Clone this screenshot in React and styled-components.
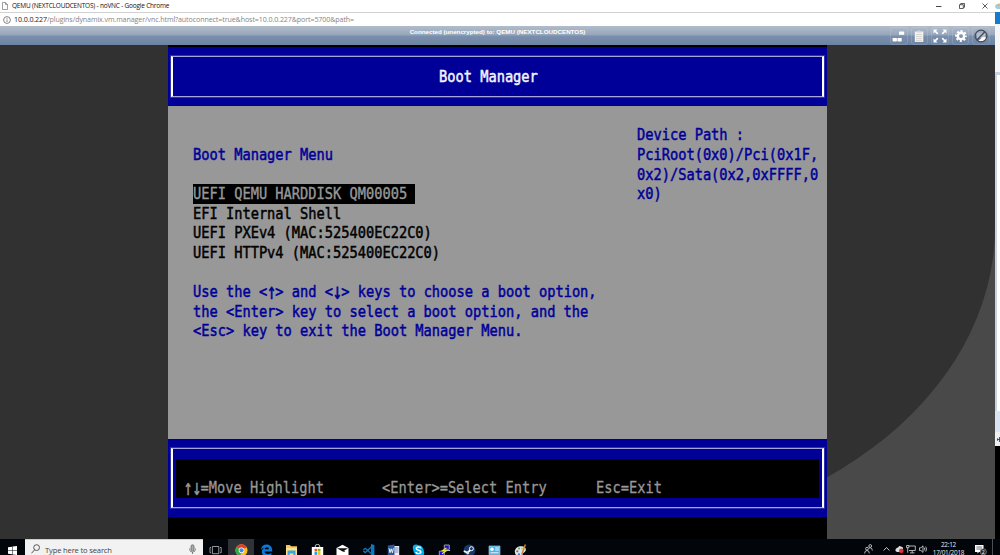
import styled, { createGlobalStyle } from 'styled-components'

const GlobalStyle = createGlobalStyle`
    * { box-sizing: border-box; }
    body {
        margin: 0;
        background: #000;
        overflow: hidden;
        font-family: "Open Sans", "Noto Sans", sans-serif;
    }
    svg { display: block; flex: none; }
`

const Desktop = styled.div`
    width: 1000px;
    height: 555px;
    display: flex;
    flex-direction: column;
    overflow: hidden;
`
const Workspace = styled.div`
    height: 539px;
    display: flex;
`
const ChromeWindow = styled.div`
    width: 995px;
    display: flex;
    flex-direction: column;
`
const TitleBar = styled.div`
    height: 13px;
    background: #fff;
    border-bottom: 1px solid #d2d2d2;
    display: flex;
    align-items: center;
    padding: 0 7px 0 2px;
`
const Title = styled.span`
    font-size: 6.5px;
    line-height: 12px;
    letter-spacing: -0.2px;
    white-space: nowrap;
    color: #111;
    margin-left: 4px;
    flex: 1;
`
const WindowButtons = styled.div`
    display: flex;
    gap: 17px;
    margin-top: -1px;
`
const AddressBar = styled.div`
    height: 13px;
    background: #fff;
    display: flex;
    align-items: center;
    padding-left: 3px;
`
const Address = styled.span`
    font-size: 7.1px;
    line-height: 13px;
    margin-left: 3px;
    white-space: nowrap;
    color: #858585;
    letter-spacing: -0.1px;
    b { font-weight: 400; color: #222; }
`
const NoVncBar = styled.div`
    height: 19px;
    background: linear-gradient(#b2bdcb 0%, #94a5bb 49%, #7b90ad 51%, #6c83a3 100%);
    display: grid;
    grid-template-columns: 105px 1fr 105px;
`
const Status = styled.div`
    font: bold 6.22px/12px "Liberation Sans", Arial, sans-serif;
    text-align: center;
    color: #fff;
    white-space: nowrap;
`
const Tools = styled.div`
    display: flex;
    justify-content: flex-end;
    gap: 2.6px;
    padding: 0.5px 5px 0 0;
`
const ToolButton = styled.div`
    width: 18px;
    height: 18px;
    border: 1px solid rgba(255, 255, 255, 0.13);
    border-radius: 3px;
    display: flex;
    align-items: center;
    justify-content: center;
`
const Backdrop = styled.div`
    flex: 1;
    background: #494949;
`
const Screen = styled.div`
    height: 494px;
    background: #313131;
    border-bottom-right-radius: 417px 312px;
    display: flex;
    padding-left: 168px;
`
const Terminal = styled.div`
    width: 659px;
    background: #000;
    padding-top: 2px;
    font-family: "DejaVu Sans Mono", monospace;
`
const Banner = styled.div`
    height: 59px;
    background: #000098;
    padding: 9px 3px 8.5px;
`
const Frame = styled.div`
    height: ${p => p.$height};
    border-style: solid;
    border-color: #a5a5dc #fff;
    border-width: 1px 2px;
    display: flex;
    flex-direction: column;
    outline: 1px solid rgba(140, 140, 215, 0.35);
`
const BannerText = styled.div`
    flex: 1;
    display: flex;
    align-items: center;
    padding-left: 266px;
`
// 80x25 text grid: one cell is 8.235 x 19.58
const Line = styled.div`
    font-size: 16px;
    line-height: 19.58px;
    height: 19.58px;
    width: 0;
    white-space: pre;
    transform: scaleX(0.855);
    transform-origin: 0 50%;
    -webkit-text-stroke: ${p => p.$stroke || '0.5px'};
    color: ${p => p.$color || '#000098'};
`
const Arrow = styled.span`
    display: inline-block;
    transform: translateY(-0.5px) scale(1.1, 1.4);
`
const Panel = styled.div`
    height: 332.5px;
    background: #989898;
    display: grid;
    grid-template-columns: 444.5px 1fr;
    padding: 19.4px 0 0 24.5px;
`
const Menu = styled.div`
    padding-top: 19.58px;
`
const Options = styled.div`
    margin: 19.58px 0;
`
const Selected = styled.div`
    width: 222.4px;
    height: 19.58px;
    background: #000;
`
const Footer = styled.div`
    height: 78.5px;
    background: #000098;
    padding: 9.5px 3px;
`
const Keys = styled.div`
    margin: 9.5px 3.5px 0 3px;
    height: 39.2px;
    background: #000;
    display: grid;
    grid-template-columns: 197.6px 214.1px 1fr;
    align-items: end;
    padding-left: 8px;
`
const Background = styled.div`
    width: 5px;
    display: flex;
    flex-direction: column;
    background: #000;
`
const Strip = styled.div`
    height: ${p => p.$height}px;
    background: ${p => p.$color};
    border-left: ${p => p.$edge || 'none'};
    border-top: ${p => p.$top || 'none'};
    overflow: hidden;
`
const Taskbar = styled.div`
    height: 16px;
    background: #02060b;
    display: flex;
    overflow: hidden;
`
const StartButton = styled.div`
    width: 25px;
    padding: 6.5px 0 0 8px;
`
const Search = styled.div`
    width: 178px;
    height: 16px;
    background: #f2f2f2;
    border-top: 1px solid #ccc;
    display: flex;
    align-items: flex-start;
    padding: 4px 7px 0 6px;
`
const SearchText = styled.span`
    flex: 1;
    font-size: 7.6px;
    line-height: 12px;
    margin-left: 5px;
    letter-spacing: -0.16px;
    color: #444;
    white-space: nowrap;
`
const TaskButton = styled.div`
    width: 25.4px;
    height: 16px;
    padding-top: 5px;
    display: flex;
    justify-content: center;
    background: ${p => (p.$active ? '#2f3236' : 'transparent')};
`
const Tray = styled.div`
    margin-left: auto;
    display: flex;
    align-items: flex-start;
    padding-top: 5px;
`
const TrayIcon = styled.div`
    width: ${p => p.$width}px;
    display: flex;
    justify-content: center;
`
const Clock = styled.div`
    width: 39px;
    margin: -3px 0 0 1px;
    font-size: 6.4px;
    line-height: 8.4px;
    text-align: center;
    letter-spacing: -0.25px;
    color: #e8e8e8;
`
const ShowDesktop = styled.div`
    width: 8px;
    height: 16px;
    margin-top: -5px;
    border-left: 1px solid #4c4f53;
`

const tools = [
    <svg width="14" height="14" viewBox="0 0 14 14" fill="#fff">
        <rect x="7" y="2.4" width="5.2" height="3.4" rx=".6" />
        <rect x="0.6" y="9" width="4.3" height="3.4" rx=".6" />
        <rect x="5.4" y="9" width="4.3" height="3.4" rx=".6" />
    </svg>,
    <svg width="14" height="14" viewBox="0 0 14 14">
        <path d="M2.8 2.5h8.5v10.4H2.8z" fill="#f5f3ed" />
        <path d="M4.8 2.7 6 1.2h2l1.2 1.5v.8H4.8z" fill="#d3d3d3" />
        <path d="M4 5.5h6M4 7.5h6M4 9.5h6M4 11.4h6" stroke="#c0c0bc" strokeWidth=".6" />
    </svg>,
    <svg width="14" height="14" viewBox="0 0 14 14" fill="#fff" stroke="#fff" strokeWidth="1.7">
        <path d="M1.5 1.5l3.3 3.3M12.5 1.5 9.2 4.8M1.5 12.5l3.3-3.3M12.5 12.5 9.2 9.2" />
        <path stroke="none" d="M.5.5h4L.5 4.5zM13.5.5h-4l4 4zM.5 13.5h4l-4-4zM13.5 13.5h-4l4-4z" />
    </svg>,
    <svg width="14" height="14" viewBox="0 0 14 14" fill="none" stroke="#fff">
        <circle cx="7" cy="7" r="3.2" strokeWidth="2.4" />
        <circle cx="7" cy="7" r="4.9" strokeWidth="2" strokeDasharray="2.1 1.748" strokeDashoffset="1.05" />
    </svg>,
    <svg width="14" height="14" viewBox="0 0 14 14" fill="none">
        <path d="M3 3.8h8v5.3H3z" fill="#b4bdc9" />
        <path d="M4.5 12 7 9.6l1-1.400 3.6-.2.4 2L9 12z" fill="#fff" />
        <circle cx="7" cy="7" r="5.9" stroke="#454b54" strokeWidth="1.2" />
        <path d="M10.9 2.8 3 11" stroke="#454b54" strokeWidth="1.3" />
    </svg>,
]

const apps = [
    { name: 'taskview', icon: <g fill="none" stroke="#bbb" strokeWidth=".8"><path d="M3.4 2.5h6.4v7.2H3.4zM2 3.5H1v5.2h1M11 3.5h1.2v5.2H11" /></g> },
    { name: 'chrome', active: true, icon: <>
        <circle cx="6.5" cy="6.3" r="6" fill="#fbc116" />
        <path d="M6.5 6.3 1.3 3.3a6 6 0 0 1 10.4 0z" fill="#e33b2e" />
        <path d="M6.5 6.3 1.3 3.3a6 6 0 0 0 4 8.9z" fill="#2da94f" />
        <circle cx="6.5" cy="6.3" r="2.8" fill="#fff" /><circle cx="6.5" cy="6.3" r="2.1" fill="#4285f4" /></> },
    { name: 'edge', icon: <path d="M1 6C1.4 2.4 3.5.6 6.6.6c3.5 0 5.6 2.5 5.6 5.7v1.3H4.5c.1 2.6 4.2 3.2 6.9 1.5v2.7C7.3 14 1.9 12.4 1.9 8c0-2 1-3.4 2.6-4.2C2.8 4 1.8 4.8 1 6zm3.7-.7h4.2C8.9 2.6 4.9 2.7 4.7 5.3z" fill="#0b79d7" /> },
    { name: 'explorer', icon: <>
        <path d="M1 1h4l1 1.2h6v10H1z" fill="#f3c85c" /><path d="M1 4h11v8H1z" fill="#fde391" />
        <path d="M2.5 6.5h8V12H8.3V9.4H4.7V12H2.5z" fill="#3fa3dc" /></> },
    { name: 'store', icon: <>
        <path d="M4.3 3V1.8Q4.3.5 6.5.5t2.2 1.3V3" fill="none" stroke="#ddd" strokeWidth=".9" />
        <path d="M.8 3h11.4v10H.8z" fill="#fff" />
        <path d="M3.5 4.8h2.7v2.7H3.5z" fill="#f25022" /><path d="M6.8 4.8h2.7v2.7H6.8z" fill="#7fba00" />
        <path d="M3.5 8.1h2.7v2.7H3.5z" fill="#00a4ef" /><path d="M6.8 8.1h2.7v2.7H6.8z" fill="#ffb900" /></> },
    { name: 'mail', icon: <><path d="M.5 4 6.5.8l6 3.2v8H.5z" fill="#fff" /><path d="M1 4.3h11L8.2 6.8l1 1.3-2.6-.5z" fill="#111" /></> },
    { name: 'code', icon: <><path d="M9 0l3.4 1.1v10.8L9 13z" fill="#0a7ac4" /><path d="M9.3 3 3.3 8.6 1.3 6.9M9.3 9.8 3.3 4.3 1.3 5.9" fill="none" stroke="#0a7ac4" strokeWidth="1.3" /></> },
    { name: 'word', icon: <>
        <path d="M7 2h5.2v9H7z" fill="#e8edf6" /><path d="M8 4h3.4M8 6h3.4M8 8h3.4" stroke="#3d61a6" strokeWidth=".7" />
        <path d="M.8 1.6 7.5.5v12L.8 11.2z" fill="#2b5797" /><path d="m2 4.3 1 4.4 1.2-3.9 1.2 3.9 1-4.4" fill="none" stroke="#fff" strokeWidth=".9" /></> },
    { name: 'skype', icon: <>
        <circle cx="6.5" cy="6.3" r="5.1" fill="#00aff0" /><circle cx="4" cy="3.7" r="3.2" fill="#00aff0" /><circle cx="9" cy="9" r="3.2" fill="#00aff0" />
        <path d="M9 4.4C8.5 2.5 4.3 2.5 4.3 4.6c0 2.2 4.7 1.2 4.7 3.4 0 2.2-4.7 2.1-5 0" fill="none" stroke="#fff" strokeWidth="1.4" /></> },
    { name: 'putty', icon: <>
        <path d="M6.3 1h5v4.3h-5zM1.3 7.2h5v4.3h-5z" fill="#1515c7" stroke="#aaa" strokeWidth=".9" />
        <path d="M5.8 6.5h6.3" stroke="#bbb" /><path d="m8.5 4-4 2.6 3.7.4L4 9.8" fill="none" stroke="#f7e832" strokeWidth="1.1" /></> },
    { name: 'steam', icon: <>
        <circle cx="6.5" cy="6.3" r="5.9" fill="#173b66" /><circle cx="8.4" cy="4.7" r="2" fill="none" stroke="#fff" strokeWidth="1" />
        <path d="M.8 7 4.5 8.7 7 6.3" fill="none" stroke="#fff" strokeWidth="1.8" /><circle cx="4.8" cy="9" r="1.4" fill="#ddd" /></> },
    { name: 'panel', icon: <>
        <path d="M1 2h11v8.7H1z" fill="#49b4ec" stroke="#a9ddfa" strokeWidth=".6" /><circle cx="4" cy="5.3" r="1.7" fill="#fff" />
        <path d="M7.2 4h3.7M7.2 6h3.7M2.5 8.8h8" stroke="#fff" strokeWidth=".9" /></> },
    { name: 'paint', icon: <>
        <path d="M.8 7.3C1.2 3.4 5.4 1.4 9.2 2.5c3.8 1 3 4.9.8 6C8 9.4 9 13 5.7 12.7 2.5 12.5.6 10 .8 7.3z" fill="#d9e7ee" />
        <circle cx="3.3" cy="7.3" r="1.1" fill="#de473e" /><circle cx="5" cy="4.6" r="1" fill="#4aa55e" /><circle cx="8" cy="4.5" r="1" fill="#efbd31" /><circle cx="5" cy="10.4" r="1.1" fill="#2d7dcc" />
        <path d="m11.4.5-3.7 10" stroke="#cf8433" strokeWidth="1.5" /></> },
]

const NoVnc = () => (
    <NoVncBar>
        <span />
        <Status>Connected (unencrypted) to: QEMU (NEXTCLOUDCENTOS)</Status>
        <Tools>
            {tools.map((icon, i) => <ToolButton key={i}>{icon}</ToolButton>)}
        </Tools>
    </NoVncBar>
)

const BootManager = () => (
    <Terminal>
        <Banner>
            <Frame $height="41px">
                <BannerText><Line $color="#f4f4ff">Boot Manager</Line></BannerText>
            </Frame>
        </Banner>
        <Panel>
            <Menu>
                <Line>Boot Manager Menu</Line>
                <Options>
                    <Selected><Line $color="#989898" $stroke="0.4px">UEFI QEMU HARDDISK QM00005</Line></Selected>
                    <Line $color="#000">EFI Internal Shell</Line>
                    <Line $color="#000">UEFI PXEv4 (MAC:525400EC22C0)</Line>
                    <Line $color="#000">UEFI HTTPv4 (MAC:525400EC22C0)</Line>
                </Options>
                <Line>{'Use the <'}<Arrow>↑</Arrow>{'> and <'}<Arrow>↓</Arrow>{'> keys to choose a boot option,'}</Line>
                <Line>{'the <Enter> key to select a boot option, and the'}</Line>
                <Line>{'<Esc> key to exit the Boot Manager Menu.'}</Line>
            </Menu>
            <div>
                <Line>Device Path :</Line>
                <Line>PciRoot(0x0)/Pci(0x1F,</Line>
                <Line>0x2)/Sata(0x2,0xFFFF,0</Line>
                <Line>x0)</Line>
            </div>
        </Panel>
        <Footer>
            <Frame $height="60px">
                <Keys>
                    <Line $color="#989898" $stroke="0.3px"><Arrow>↑</Arrow><Arrow>↓</Arrow>=Move Highlight</Line>
                    <Line $color="#989898" $stroke="0.3px">{'<Enter>=Select Entry'}</Line>
                    <Line $color="#989898" $stroke="0.3px">Esc=Exit</Line>
                </Keys>
            </Frame>
        </Footer>
    </Terminal>
)

const App = () => {
    return (
        <>
            <GlobalStyle />
            <Desktop>
                <Workspace>
                    <ChromeWindow>
                        <TitleBar>
                            <svg width="6" height="8" viewBox="0 0 6 8" fill="#fff" stroke="#777" strokeWidth=".7">
                                <path d="M.5.5h3l2 2v5h-5zM3.5.5v2h2" />
                            </svg>
                            <Title>QEMU (NEXTCLOUDCENTOS) - noVNC - Google Chrome</Title>
                            <WindowButtons>
                                <svg width="6" height="6" viewBox="0 0 6 6" stroke="#333" strokeWidth=".9"><path d="M0 3.5h5.5" /></svg>
                                <svg width="6" height="6" viewBox="0 0 6 6" fill="none" stroke="#333" strokeWidth=".8"><path d="M.5 1.7h3.8v3.8H.5zM1.7 1.7V.5h3.8v3.8H4.3" /></svg>
                                <svg width="6" height="6" viewBox="0 0 6 6" stroke="#333" strokeWidth=".8"><path d="m.5.5 5 5m0-5-5 5" /></svg>
                            </WindowButtons>
                        </TitleBar>
                        <AddressBar>
                            <svg width="8" height="8" viewBox="0 0 8 8" fill="none" stroke="#666" strokeWidth=".8">
                                <circle cx="4" cy="4" r="3.4" /><path d="M4 3.5v2.4M4 1.9v.9" />
                            </svg>
                            <Address>
                                <b>10.0.0.227</b>/plugins/dynamix.vm.manager/vnc.html?autoconnect=true&amp;host=10.0.0.227&amp;port=5700&amp;path=
                            </Address>
                        </AddressBar>
                        <NoVnc />
                        <Backdrop>
                            <Screen><BootManager /></Screen>
                        </Backdrop>
                    </ChromeWindow>
                    <Background>
                        <Strip $height={12} $color="#fff">
                            <svg width="5" height="12" viewBox="0 0 5 12">
                                <path d="M0 6q1-3 5-2.5V9H2Q0 8.5 0 6z" fill="#9fd0dc" /><circle cx="3.5" cy="5" r="1" fill="#e5ad6c" />
                            </svg>
                        </Strip>
                        <Strip $height={12} $color="#1979ca" />
                        <Strip $height={48} $color="#f4f5f7" />
                        <Strip $height={339} $color="#fff" $edge="2px solid #c9d3e5" $top="3px solid #c9d3e5" />
                        <Strip $height={21} $color="#d9e4f2" />
                        <Strip $height={14} $color="#f0f0f0">
                            <svg width="5" height="14" viewBox="0 0 5 14" stroke="#34435c" strokeWidth=".9"><path d="M2 7.5h3M4.5 5v5M2.6 6.2v2.6" /></svg>
                        </Strip>
                    </Background>
                </Workspace>
                <Taskbar>
                    <StartButton>
                        <svg width="9" height="9" viewBox="0 0 9 9" fill="#fff">
                            <path d="M0 1.2 4 .7v3.6H0zM4.5.6 9 0v4.3H4.5zM0 4.8h4v3.5L0 7.8zM4.5 4.8H9V9l-4.5-.6z" />
                        </svg>
                    </StartButton>
                    <Search>
                        <svg width="9" height="10" viewBox="0 0 9 10" fill="none" stroke="#444" strokeWidth=".9">
                            <circle cx="5.6" cy="3.6" r="2.9" /><path d="M3.6 5.8.5 9.3" />
                        </svg>
                        <SearchText>Type here to search</SearchText>
                        <svg width="7" height="11" viewBox="0 0 7 11" fill="none" stroke="#666" strokeWidth=".8">
                            <rect x="2" y=".8" width="3" height="6" rx="1.5" fill="#aaa" /><path d="M.6 4.5v1Q.8 8 3.5 8t2.9-2.5v-1M3.5 8v2" />
                        </svg>
                    </Search>
                    {apps.map(app => (
                        <TaskButton key={app.name} $active={app.active}>
                            <svg width="13" height="13" viewBox="0 0 13 13">{app.icon}</svg>
                        </TaskButton>
                    ))}
                    <Tray>
                        <TrayIcon $width={18}>
                            <svg width="9" height="10" viewBox="0 0 9 10" fill="none" stroke="#ddd" strokeWidth=".8">
                                <circle cx="6.2" cy="2" r="1.4" /><circle cx="3" cy="4.7" r="1.4" /><path d="M.6 9.5Q.7 6.5 3 6.5t2.3 3M4.8 4.2Q8 2.8 8.3 6.5" />
                            </svg>
                        </TrayIcon>
                        <TrayIcon $width={18}>
                            <svg width="7" height="10" viewBox="0 0 7 10" fill="none" stroke="#ddd" strokeWidth=".9"><path d="m.6 6.5 2.9-3 2.9 3" /></svg>
                        </TrayIcon>
                        <TrayIcon $width={8}>
                            <svg width="9" height="10" viewBox="0 0 9 10">
                                <path d="M.5 7Q0 4 3 3.5 4 1 6 2.5l2 1V8H2z" fill="#ddd" /><circle cx="6.3" cy="6.8" r="2.3" fill="#e5303b" />
                            </svg>
                        </TrayIcon>
                        <TrayIcon $width={16}>
                            <svg width="10" height="10" viewBox="0 0 10 10" fill="none" stroke="#ddd" strokeWidth=".8"><path d="M3 2h6.3v4.5H3M6.2 6.5v2.3M4 8.9h4.5M.6 1.5h2.3v2.2H.6zM1.7 3.7v5" /></svg>
                        </TrayIcon>
                        <TrayIcon $width={9}>
                            <svg width="9" height="10" viewBox="0 0 9 10" fill="none" stroke="#ddd" strokeWidth=".8"><path d="M.5 3.8h1.4L4 1.8v6.6L1.9 6.5H.5zM5.3 3.7q1 1.4 0 2.8M6.7 2.6q1.7 2.5 0 5" /></svg>
                        </TrayIcon>
                        <Clock>22:12<br />17/01/2018</Clock>
                        <TrayIcon $width={24}>
                            <svg width="13" height="12" viewBox="0 0 13 12">
                                <path d="M1 1h8.5v7H5L3.5 9.5V8H1z" fill="#fff" /><path d="M2.4 3h5.7M2.4 5h5.7" stroke="#333" strokeWidth=".7" />
                                <circle cx="9.3" cy="7.8" r="3.1" fill="#222" stroke="#aaa" strokeWidth=".6" />
                                <text x="9.3" y="9.7" fontSize="5.2" textAnchor="middle" fill="#fff">2</text>
                            </svg>
                        </TrayIcon>
                        <ShowDesktop />
                    </Tray>
                </Taskbar>
            </Desktop>
        </>
    )
}

export default App
